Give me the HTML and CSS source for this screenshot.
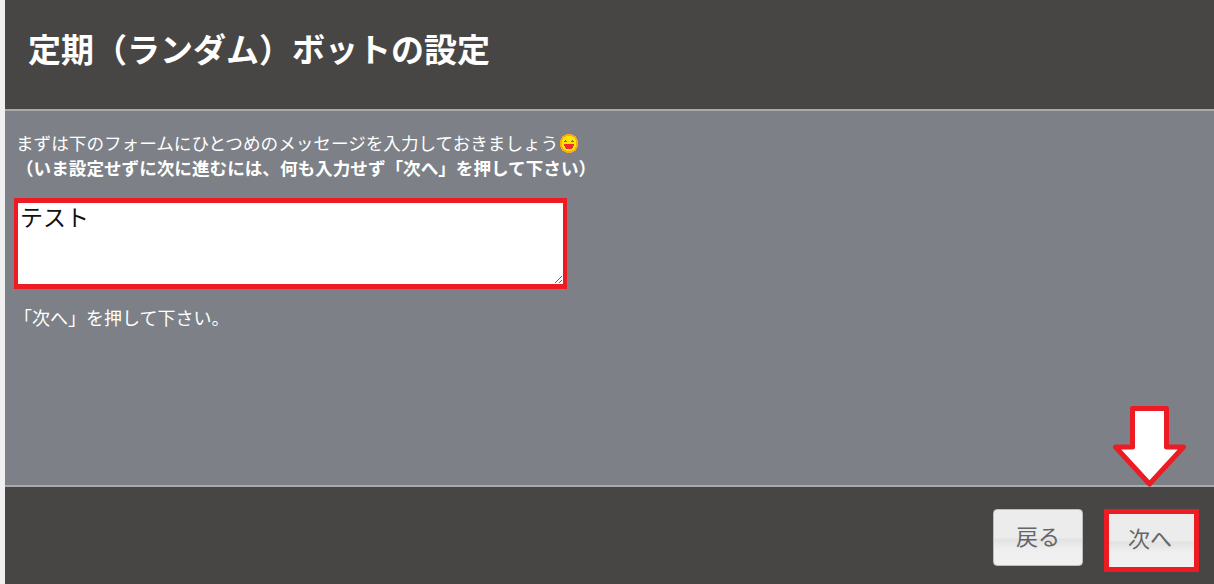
FILE: index.html
```html
<!DOCTYPE html>
<html lang="ja">
<head>
<meta charset="utf-8">
<title>定期（ランダム）ボットの設定</title>
<link rel="stylesheet" href="styles.css">
</head>
<body>
<div class="dialog">
  <header class="head"><h1>定期（ランダム）ボットの設定</h1></header>
  <main class="content">
    <p class="intro">まずは下のフォームにひとつめのメッセージを入力しておきましょう<svg class="emoji" viewBox="0 0 18 19" width="18" height="19" shape-rendering="crispEdges" aria-hidden="true"><path d="M6 0h6v1h2v1h2v2h1v2h1v7h-1v2h-1v2h-2v1h-2v1H6v-1H4v-1H2v-2H1v-2H0V6h1V4h1V2h2V1h2z" fill="#f9a825"/><path d="M6 2h6v1h2v1h1v2h1v7h-1v2h-1v1h-2v1H6v-1H4v-1H3v-2H2V6h1V4h1V3h2z" fill="#ffe600"/><path d="M5 6h1v1h1v1H4V7h1zM12 6h1v1h1v1h-3V7h1z" fill="#7d7a18"/><path d="M4 10h10v2h-1v2h-1v1H6v-1H5v-2H4z" fill="#ee2a35"/></svg><br><strong>（いま設定せずに次に進むには、何も入力せず「次へ」を押して下さい）</strong></p>
    <textarea class="message">テスト</textarea>
    <p class="hint">「次へ」を押して下さい。</p>
  </main>
  <footer class="foot">
    <button class="btn" type="button">戻る</button>
    <button class="btn btn-next" type="button">次へ</button>
  </footer>
  <svg class="arrow" viewBox="0 0 73 82" width="73" height="82" aria-hidden="true"><path d="M19.5 2.5H53.5V41H70.5L36.5 78 2.5 41H19.5z" fill="#fff" stroke="#ed1c24" stroke-width="5" stroke-linejoin="round"/></svg>
</div>
</body>
</html>
```

FILE: styles.css
```css
* { box-sizing: border-box; }
html, body { margin: 0; padding: 0; height: 100%; }
body {
  background: #f0f0f0;
  font-family: "Noto Sans CJK JP", "Noto Sans", sans-serif;
  overflow: hidden;
}
.dialog {
  position: relative;
  margin-left: 5px;
  height: 584px;
  display: flex;
  flex-direction: column;
  background: #7d8187;
}
.head {
  height: 111px;
  flex: none;
  display: flex;
  align-items: center;
  padding: 0 0 14px 23px;
  background: #474644;
  border-bottom: 2px solid #aaaaaa;
}
.head h1 {
  margin: 0;
  font-size: 33px;
  line-height: 44px;
  font-weight: 700;
  color: #fff;
}
.content {
  flex: 1;
  padding: 19px 0 0 11px;
  color: #fff;
}
.intro {
  margin: 0;
  font-size: 17.6px;
  line-height: 25px;
}
.emoji { vertical-align: -3px; margin-left: 2px; }
.message {
  display: block;
  width: 553px;
  height: 91px;
  margin: 18px 0 0 -2px;
  padding: 0 1px 0 2px;
  border-style: solid;
  border-width: 5px 4px;
  border-color: #ed1c24;
  border-radius: 0;
  background: #fff;
  color: #111;
  font: 23px/27px "Noto Sans CJK JP", sans-serif;
}
.hint {
  margin: 15px 0 0 -2px;
  font-size: 18px;
  line-height: 26px;
}
.foot {
  flex: none;
  height: 99px;
  display: flex;
  justify-content: flex-end;
  align-items: flex-start;
  gap: 21px;
  padding: 22px 15px 0 0;
  background: #474644;
  border-top: 2px solid #aaaaaa;
}
.btn {
  width: 90px;
  height: 57px;
  padding: 0 0 5px;
  border: 1px solid #bdbdbd;
  border-radius: 4px;
  background: linear-gradient(#ececec 0 50%, #e2e2e2 53%, #efefef 72%, #f1f1f1);
  color: #666;
  font: 22px "Noto Sans CJK JP", sans-serif;
}
.btn-next {
  width: 95px;
  height: 63px;
  padding: 0 3px 7px 0;
  border: 5px solid #ed1c24;
  border-radius: 0;
}
.arrow {
  position: absolute;
  left: 1108px;
  top: 406px;
}
```
